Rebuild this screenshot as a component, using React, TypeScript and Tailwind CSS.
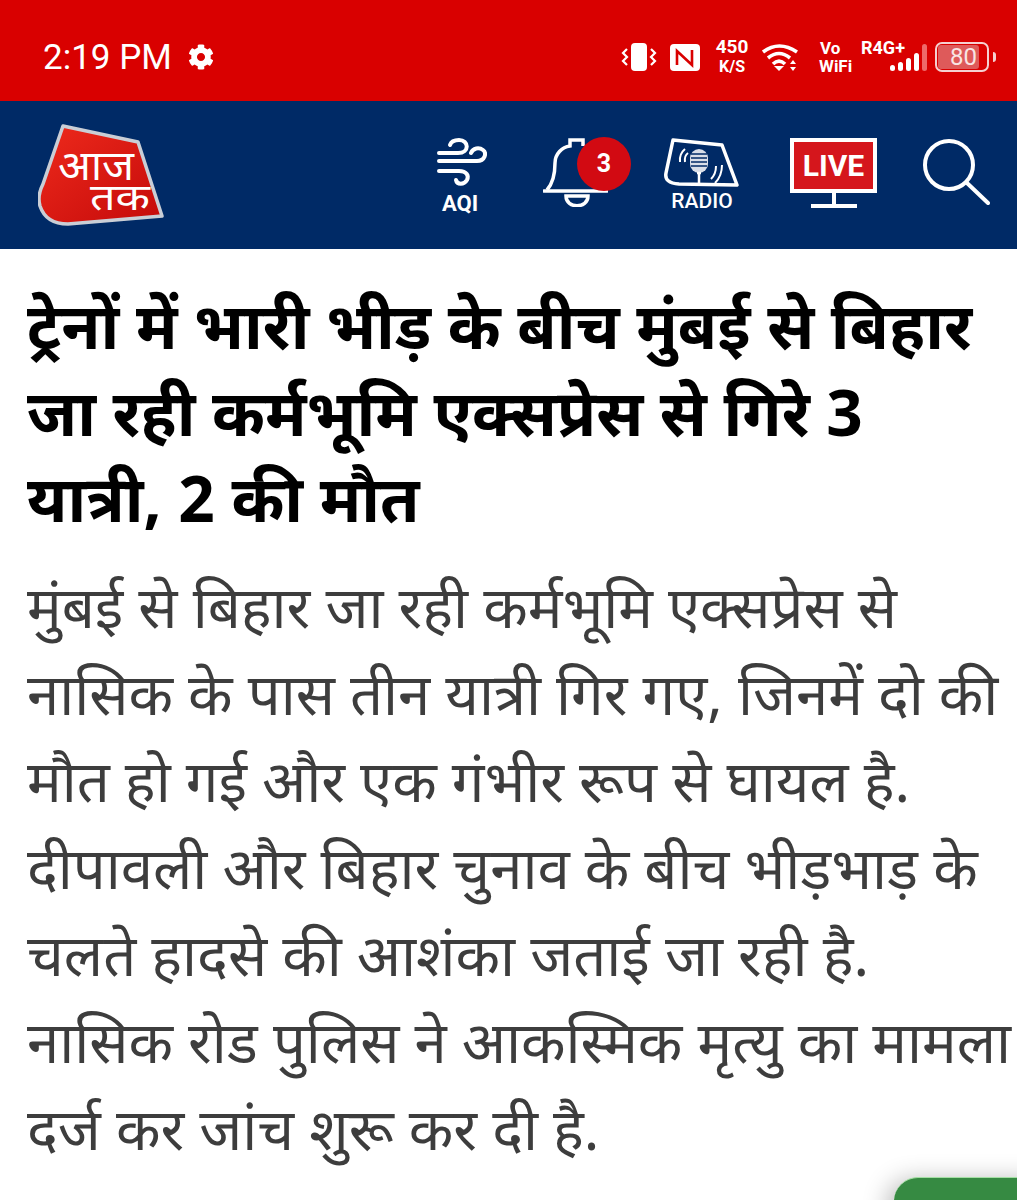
import { FaCog } from 'react-icons/fa';

const headline = [
    'ट्रेनों में भारी भीड़ के बीच मुंबई से बिहार',
    'जा रही कर्मभूमि एक्सप्रेस से गिरे 3',
    'यात्री, 2 की मौत',
];

const summary = [
    'मुंबई से बिहार जा रही कर्मभूमि एक्सप्रेस से',
    'नासिक के पास तीन यात्री गिर गए, जिनमें दो की',
    'मौत हो गई और एक गंभीर रूप से घायल है.',
    'दीपावली और बिहार चुनाव के बीच भीड़भाड़ के',
    'चलते हादसे की आशंका जताई जा रही है.',
    'नासिक रोड पुलिस ने आकस्मिक मृत्यु का मामला',
    'दर्ज कर जांच शुरू कर दी है.',
];

function StatusIcons() {
    return (
        <div className="flex items-center text-white font-['Roboto',sans-serif] font-bold">
            <svg width="37" height="28" viewBox="0 0 37 28" fill="none" stroke="white" strokeWidth="2.2">
                <rect x="11" y="0" width="16" height="28" rx="4" fill="white" stroke="none" />
                <path d="M7 6 L3 10 L7 14 L3 18 L7 22" />
                <path d="M31 6 L35 10 L31 14 L35 18 L31 22" />
            </svg>
            <svg className="ml-[13px]" width="30" height="27" viewBox="0 0 30 27">
                <rect width="30" height="27" rx="4" fill="white" />
                <path d="M7 21 V7 L22 21 V6" fill="none" stroke="#d90000" strokeWidth="2.6" />
            </svg>
            <div className="ml-[16px] flex w-[32px] flex-col items-center text-[19px] leading-[20px]">
                <span>450</span>
                <span className="text-[16px]">K/S</span>
            </div>
            <svg className="ml-[14px]" width="36" height="28" viewBox="0 0 36 28" fill="none" stroke="white" strokeWidth="3.6">
                <path d="M1 9 Q17 -3 35 9" />
                <path d="M6 15 Q17 6 28 15" />
                <path d="M11 21 Q17 15 23 21" />
                <path d="M12 23 H22 L17 28 Z" fill="white" stroke="none" />
                <path d="M28 21 L31 17 L34 21 Z M28 24 L31 28 L34 24 Z" fill="white" stroke="none" />
            </svg>
            <div className="ml-[21px] flex w-[34px] flex-col items-start text-[17px] leading-[18px]">
                <span className="ml-[1px]">Vo</span>
                <span>WiFi</span>
            </div>
            <div className="relative ml-[7px] h-[34px] w-[65px]">
                <span className="absolute left-[1px] top-[-1px] text-[18px] leading-[18px]">R4G+</span>
                <div className="absolute bottom-[3px] left-[30px] flex items-end gap-[3px]">
                    <span className="h-[6px] w-[5px] rounded-sm bg-white" />
                    <span className="h-[9px] w-[5px] rounded-sm bg-white" />
                    <span className="h-[13px] w-[5px] rounded-sm bg-white" />
                    <span className="h-[18px] w-[5px] rounded-sm bg-white" />
                    <span className="h-[27px] w-[5px] rounded-sm bg-[#ee6a6a]" />
                </div>
            </div>
            <div className="ml-[10px] flex items-center">
                <div className="h-[30px] w-[54px] rounded-[7px] border-2 border-[#f5d0d0] p-[1px]">
                    <div className="flex h-full w-[41px] items-center justify-end rounded-[3px] bg-[#de5a5a] pr-[2px] text-[24px] font-normal leading-none text-[#f8e4e4]">
                        80
                    </div>
                </div>
                <span className="ml-[4px] h-[10px] w-[3px] rounded-r-sm bg-[#f5d0d0]" />
            </div>
        </div>
    );
}

function Logo() {
    return (
        <svg width="126" height="102" viewBox="0 0 126 102">
            <defs>
                <linearGradient id="logoRed" x1="0" y1="0" x2="1" y2="1">
                    <stop offset="0" stopColor="#ee2a1c" />
                    <stop offset="1" stopColor="#c40a0a" />
                </linearGradient>
            </defs>
            <path
                d="M25 2 L100 18 L124 92 L30 100 Q8 100 2 82 Q-1 72 5 60 Z"
                fill="url(#logoRed)"
                stroke="#c9ced6"
                strokeWidth="3.5"
                strokeLinejoin="round"
            />
            <text x="20" y="56" fill="white" fontSize="42" fontFamily="'Noto Sans', sans-serif" textLength="76" lengthAdjust="spacingAndGlyphs">आज</text>
            <text x="52" y="86" fill="white" fontSize="36" fontFamily="'Noto Sans', sans-serif" textLength="60" lengthAdjust="spacingAndGlyphs">तक</text>
        </svg>
    );
}

function NavIcons() {
    return (
        <div className="mt-[37px] flex items-start self-start text-white font-['Roboto',sans-serif] font-bold">
            <div className="flex w-[50px] flex-col items-center">
                <svg width="50" height="49" viewBox="0 0 50 49" fill="none" stroke="white" strokeWidth="4" strokeLinecap="round">
                    <path d="M2 15 H21 C33 15 32 2 22 2 C17 2 14 4 13 7" />
                    <path d="M2 23 H40 C48 23 50 15 46 12 C42 9 36 10 34 15" />
                    <path d="M2 33 H22 C30 33 32 38 30 42 C27 47 20 47 19 42" />
                </svg>
                <span className="mt-[5px] -translate-x-[2px] text-[22px] leading-[24px]">AQI</span>
            </div>

            <div className="relative ml-[56px] h-[69px] w-[65px]">
                <svg width="65" height="69" viewBox="0 0 65 69" fill="none" stroke="white" strokeWidth="3.5">
                    <path d="M1 53 H64" strokeLinecap="round" />
                    <path d="M4 52 C11 44 12 34 12 25 C12 16 19 9 27 8 V2 H40 V8" />
                    <path d="M23 58 H45 C45 71 23 71 23 58 Z" />
                </svg>
                <div className="absolute left-[34px] top-[-1px] flex h-[54px] w-[54px] items-center justify-center rounded-full bg-[#d20a12] text-[25px] font-bold text-white">
                    3
                </div>
            </div>

            <div className="ml-[56px] flex w-[76px] flex-col items-center">
                <svg width="76" height="50" viewBox="0 0 76 50" fill="none" stroke="white" strokeWidth="3" strokeLinejoin="round">
                    <path d="M9 2 L58 7 L73 47 L15 46 Q0 45 2 35 Z" strokeWidth="3.5" />
                    <rect x="26" y="11" width="18" height="24" rx="9" fill="#d9dee8" stroke="none" />
                    <path d="M27 16 H43 M27 20 H43 M27 24 H43 M27 28 H43" stroke="#002a66" strokeWidth="1.3" />
                    <path d="M33 35 H37 M35 35 V46" strokeWidth="2.5" />
                    <path d="M16 24 Q15 16 21 11 M21 24 Q20 18 24 15" strokeWidth="2" />
                    <path d="M52 28 Q52 36 47 41 M58 27 Q58 38 51 45" strokeWidth="2" />
                </svg>
                <span className="mt-[1px] text-[21px] font-medium leading-[24px]">RADIO</span>
            </div>

            <div className="ml-[50px] flex w-[87px] flex-col items-center">
                <div className="flex h-[55px] w-[87px] items-center justify-center border-[4px] border-white bg-[#d5161c] text-[30px] font-bold leading-none">
                    LIVE
                </div>
                <span className="h-[11px] w-[4px] bg-white" />
                <span className="h-[4px] w-[46px] bg-white" />
            </div>

            <svg className="ml-[46px]" width="67" height="67" viewBox="0 0 67 67" fill="none" stroke="white" strokeWidth="4" strokeLinecap="round">
                <circle cx="26" cy="27" r="24" />
                <path d="M44 45 L65 65" />
            </svg>
        </div>
    );
}

export default function App() {
    return (
        <div className="relative h-[1200px] w-[1017px] overflow-hidden bg-white">
            {/* Status bar */}
            <div className="flex h-[101px] items-center justify-between bg-[#d90000] pl-[43px] pr-[21px] pt-[13px]">
                <div className="flex items-center gap-[16px] font-['Roboto',sans-serif] text-[35px] leading-none text-white">
                    <span>2:19 PM</span>
                    <FaCog size={26} />
                </div>
                <StatusIcons />
            </div>

            {/* Header */}
            <div className="flex h-[148px] items-center justify-between bg-[#002a66] pl-[38px] pr-[27px]">
                <Logo />
                <NavIcons />
            </div>

            {/* Article */}
            <div className="pl-[27px] pt-[33px] font-['Noto_Sans','Noto_Sans_Devanagari',sans-serif]">
                <h1 className="text-[63.8px] font-bold leading-[86.5px] text-black whitespace-nowrap">
                    {headline.map((line) => (
                        <div key={line}>{line}</div>
                    ))}
                </h1>
                <div className="mt-[20px] text-[58px] leading-[87px] text-[#3d3d3d] whitespace-nowrap">
                    {summary.map((line) => (
                        <p key={line}>{line}</p>
                    ))}
                </div>
            </div>

            {/* Floating button */}
            <div className="absolute bottom-[-26px] right-[-40px] h-[49px] w-[163px] rounded-[24px] border-t border-[#a5e0a5] bg-[#368a42] shadow-[-6px_4px_26px_rgba(0,0,0,0.3)]" />
        </div>
    );
}
